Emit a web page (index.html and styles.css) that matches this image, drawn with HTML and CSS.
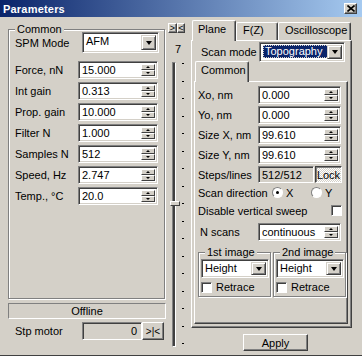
FILE: index.html
```html
<!DOCTYPE html>
<html lang="en">
<head>
    <meta charset="UTF-8">
    <title>Parameters</title>
    <link rel="stylesheet" href="styles.css">
</head>
<body>

    <div class="window">
        <div class="titlebar">
            <span class="title">Parameters</span>
            <div class="close-btn">
                <svg width="8" height="7" viewBox="0 0 8 7"><path d="M0.5 0.5 L7.5 6.5 M7.5 0.5 L0.5 6.5" stroke="#000" stroke-width="1.6"/></svg>
            </div>
        </div>

        <div class="client">
            <!-- left column -->
            <div class="left-col">
                <div class="group common-group">
                    <div class="group-label">Common</div>
                    <div class="mode-row">
                        <label>SPM Mode</label>
                        <div class="combo mode-combo">
                            <span class="combo-text">AFM</span>
                            <span class="combo-btn"><i class="arrow-down"></i></span>
                        </div>
                    </div>
                    <div class="spin-rows">
                        <div class="spin-row"><label>Force, nN</label><div class="spin"><span class="spin-text">15.000</span><span class="spin-btns"><b class="up"></b><b class="down"></b></span></div></div>
                        <div class="spin-row"><label>Int gain</label><div class="spin"><span class="spin-text">0.313</span><span class="spin-btns"><b class="up"></b><b class="down"></b></span></div></div>
                        <div class="spin-row"><label>Prop. gain</label><div class="spin"><span class="spin-text">10.000</span><span class="spin-btns"><b class="up"></b><b class="down"></b></span></div></div>
                        <div class="spin-row"><label>Filter N</label><div class="spin"><span class="spin-text">1.000</span><span class="spin-btns"><b class="up"></b><b class="down"></b></span></div></div>
                        <div class="spin-row"><label>Samples N</label><div class="spin"><span class="spin-text">512</span><span class="spin-btns"><b class="up"></b><b class="down"></b></span></div></div>
                        <div class="spin-row"><label>Speed, Hz</label><div class="spin"><span class="spin-text">2.747</span><span class="spin-btns"><b class="up"></b><b class="down"></b></span></div></div>
                        <div class="spin-row"><label>Temp., °C</label><div class="spin"><span class="spin-text">20.0</span><span class="spin-btns"><b class="up"></b><b class="down"></b></span></div></div>
                    </div>
                </div>

                <div class="status">Offline</div>

                <div class="motor-row">
                    <label>Stp motor</label>
                    <div class="motor-field">0</div>
                    <div class="btn motor-btn">&gt;|&lt;</div>
                </div>
            </div>

            <!-- slider column -->
            <div class="slider-col">
                <div class="arrow-btns">
                    <div class="btn small-btn">&gt;</div>
                    <div class="btn small-btn">&lt;</div>
                </div>
                <div class="slider-value">7</div>
                <div class="slider">
                    <div class="track">
                        <div class="thumb"></div>
                    </div>
                    <div class="ticks">
                        <i></i><i></i><i></i><i></i><i></i><i></i><i></i><i></i><i></i>
                        <i></i><i></i><i></i><i></i><i></i><i></i><i></i><i></i>
                    </div>
                </div>
            </div>

            <!-- right column -->
            <div class="right-col">
                <div class="tabs">
                    <div class="tab active tab-plane">Plane</div>
                    <div class="tab tab-fz">F(Z)</div>
                    <div class="tab tab-osc">Oscilloscope</div>
                </div>
                <div class="tab-panel">
                    <div class="scan-row">
                        <label>Scan mode</label>
                        <div class="combo scan-combo">
                            <span class="combo-text"><span class="selected-text">Topography</span></span>
                            <span class="combo-btn"><i class="arrow-down"></i></span>
                        </div>
                    </div>
                    <div class="subtabs">
                        <div class="tab active subtab">Common</div>
                    </div>
                    <div class="sub-panel">
                        <div class="field-rows">
                            <div class="field-row"><label>Xo, nm</label><div class="spin"><span class="spin-text">0.000</span><span class="spin-btns"><b class="up"></b><b class="down"></b></span></div></div>
                            <div class="field-row"><label>Yo, nm</label><div class="spin"><span class="spin-text">0.000</span><span class="spin-btns"><b class="up"></b><b class="down"></b></span></div></div>
                            <div class="field-row"><label>Size X, nm</label><div class="spin"><span class="spin-text">99.610</span><span class="spin-btns"><b class="up"></b><b class="down"></b></span></div></div>
                            <div class="field-row"><label>Size Y, nm</label><div class="spin"><span class="spin-text">99.610</span><span class="spin-btns"><b class="up"></b><b class="down"></b></span></div></div>
                            <div class="field-row steps-row">
                                <label>Steps/lines</label>
                                <div class="readonly-field">512/512</div>
                                <div class="lock-btn">Lock</div>
                            </div>
                        </div>

                        <div class="direction-row">
                            <label>Scan direction</label>
                            <span class="radio checked"></span><span class="radio-label">X</span>
                            <span class="radio radio-y"></span><span class="radio-label">Y</span>
                        </div>

                        <div class="sweep-row">
                            <label>Disable vertical sweep</label>
                            <span class="checkbox"></span>
                        </div>

                        <div class="field-row nscans-row">
                            <label>N scans</label>
                            <div class="spin"><span class="spin-text">continuous</span><span class="spin-btns"><b class="up"></b><b class="down"></b></span></div>
                        </div>

                        <div class="image-groups">
                            <div class="group image-group first-image">
                                <div class="group-label">1st image</div>
                                <div class="combo image-combo">
                                    <span class="combo-text">Height</span>
                                    <span class="combo-btn"><i class="arrow-down"></i></span>
                                </div>
                                <div class="retrace-row"><span class="checkbox"></span><span>Retrace</span></div>
                            </div>
                            <div class="group image-group second-image">
                                <div class="group-label">2nd image</div>
                                <div class="combo image-combo">
                                    <span class="combo-text">Height</span>
                                    <span class="combo-btn"><i class="arrow-down"></i></span>
                                </div>
                                <div class="retrace-row"><span class="checkbox"></span><span>Retrace</span></div>
                            </div>
                        </div>
                    </div>
                </div>
                <div class="apply-row">
                    <div class="btn apply-btn">Apply</div>
                </div>
            </div>
        </div>
    </div>

</body>
</html>
```

FILE: styles.css
```css
* {
    box-sizing: border-box;
}

body {
    margin: 0;
    font-family: 'Liberation Sans', Arial, sans-serif;
    font-size: 11px;
    color: #000;
    background-color: #d4d0c8;
}

.window {
    width: 362px;
    height: 356px;
    background-color: #d4d0c8;
    border-bottom: 1px solid #404040;
    overflow: hidden;
}

/* title bar */
.titlebar {
    height: 17px;
    display: flex;
    align-items: center;
    justify-content: space-between;
    padding: 0 5px 0 3px;
    background: linear-gradient(to right, #0a246a, #a6caf0);
}

.title {
    color: #fff;
    font-weight: bold;
    font-size: 11px;
    letter-spacing: 0.2px;
}

.close-btn {
    width: 13px;
    height: 11px;
    display: flex;
    align-items: center;
    justify-content: center;
    background-color: #d4d0c8;
    border: 1px solid;
    border-color: #fff #404040 #404040 #fff;
    box-shadow: inset -1px -1px #808080;
}

.client {
    display: flex;
    height: 338px;
}

label {
    white-space: nowrap;
}

/* bevels */
.btn {
    background-color: #d4d0c8;
    border: 1px solid;
    border-color: #fff #404040 #404040 #fff;
    box-shadow: inset -1px -1px #808080;
    display: flex;
    align-items: center;
    justify-content: center;
}

.combo,
.spin,
.motor-field,
.readonly-field {
    border: 1px solid;
    border-color: #808080 #fff #fff #808080;
    box-shadow: inset 1px 1px #404040, inset -1px -1px #d4d0c8;
    background-color: #fff;
    display: flex;
    padding: 2px;
}

.combo-text,
.spin-text {
    flex: 1;
    line-height: 13px;
    padding-left: 1px;
    white-space: nowrap;
    overflow: hidden;
}

.combo-btn {
    width: 15px;
    background-color: #d4d0c8;
    border: 1px solid;
    border-color: #d4d0c8 #404040 #404040 #d4d0c8;
    box-shadow: inset 1px 1px #fff, inset -1px -1px #808080;
    display: flex;
    align-items: center;
    justify-content: center;
}

.arrow-down {
    width: 0;
    height: 0;
    border-left: 3.5px solid transparent;
    border-right: 3.5px solid transparent;
    border-top: 4px solid #000;
}

.spin-btns {
    width: 14px;
    display: flex;
    flex-direction: column;
}

.spin-btns b {
    flex: 1;
    background-color: #d4d0c8;
    border: 1px solid;
    border-color: #fff #404040 #404040 #fff;
    display: flex;
    align-items: center;
    justify-content: center;
}

.spin-btns b::after {
    content: "";
    width: 0;
    height: 0;
    border-left: 2px solid transparent;
    border-right: 2px solid transparent;
}

.spin-btns .up::after {
    border-bottom: 2px solid #000;
}

.spin-btns .down::after {
    border-top: 2px solid #000;
}

/* group boxes */
.group {
    border: 1px solid #808080;
    box-shadow: inset 1px 1px #fff, 1px 1px #fff;
}

.group-label {
    width: fit-content;
    height: 13px;
    line-height: 13px;
    margin: -7px 0 0 6px;
    padding: 0 2px;
    background-color: #d4d0c8;
}

/* left column */
.left-col {
    width: 157px;
    margin-left: 8px;
    display: flex;
    flex-direction: column;
}

.common-group {
    margin-top: 12px;
    height: 270px;
}

.mode-row {
    display: flex;
    align-items: center;
    height: 21px;
    margin-top: -4px;
    padding-left: 6px;
}

.mode-row label {
    width: 67px;
}

.mode-combo {
    width: 77px;
    height: 21px;
}

.spin-rows {
    margin-top: 8px;
    display: flex;
    flex-direction: column;
    gap: 3px;
}

.spin-row {
    display: flex;
    align-items: center;
    height: 18px;
    padding-left: 6px;
}

.spin-row label {
    width: 63px;
}

.spin-row .spin {
    width: 80px;
    height: 18px;
}

.status {
    margin-top: 4px;
    height: 16px;
    width: 158px;
    line-height: 14px;
    text-align: center;
    border: 1px solid;
    border-color: #808080 #fff #fff #808080;
}

.motor-row {
    margin-top: 3px;
    display: flex;
    align-items: center;
    height: 18px;
    padding-left: 7px;
}

.motor-row label {
    width: 67px;
}

.motor-field {
    width: 60px;
    height: 18px;
    background-color: #d4d0c8;
    justify-content: flex-end;
    line-height: 13px;
    padding-right: 4px;
}

.motor-btn {
    width: 22px;
    height: 18px;
    font-size: 10px;
}

/* slider column */
.slider-col {
    width: 26px;
    display: flex;
    flex-direction: column;
}

.arrow-btns {
    display: flex;
    margin: 6px 0 0 3px;
}

.small-btn {
    width: 9px;
    height: 10px;
    font-size: 9px;
    line-height: 8px;
}

.small-btn + .small-btn {
    width: 8px;
}

.slider-value {
    margin-top: 11px;
    padding-left: 10px;
    line-height: 11px;
    height: 11px;
}

.slider {
    margin-top: 7px;
    display: flex;
}

.track {
    position: relative;
    width: 4px;
    height: 285px;
    margin-left: 7px;
    background-color: #404040;
    border-left: 1px solid #808080;
    border-top: 1px solid #808080;
    border-right: 1px solid #fff;
    border-bottom: 1px solid #fff;
}

.thumb {
    position: absolute;
    left: -3px;
    top: 138px;
    width: 10px;
    height: 5px;
    background-color: #d4d0c8;
    border: 1px solid;
    border-color: #fff #404040 #404040 #fff;
}

.ticks {
    height: 281px;
    margin: 1px 0 0 6px;
    display: flex;
    flex-direction: column;
    justify-content: space-between;
}

.ticks i {
    display: block;
    width: 2px;
    height: 1px;
    background-color: #000;
}

/* right column */
.right-col {
    width: 161px;
    display: flex;
    flex-direction: column;
}

.tabs {
    height: 23px;
    display: flex;
    align-items: flex-end;
    padding-left: 1px;
}

.tab {
    height: 18px;
    line-height: 15px;
    padding-left: 6px;
    background-color: #d4d0c8;
    border: 1px solid;
    border-bottom: none;
    border-color: #fff #404040 #fff #fff;
    box-shadow: inset -1px 0 #808080;
    border-radius: 2px 2px 0 0;
}

.tab.active {
    height: 21px;
    margin-bottom: -1px;
    position: relative;
    z-index: 1;
    line-height: 17px;
}

.tab-plane {
    width: 44px;
    padding-left: 5px;
}

.tab-fz {
    width: 42px;
}

.tab-osc {
    width: 73px;
}

.tab-panel {
    height: 288px;
    width: 161px;
    border: 1px solid;
    border-color: #fff #404040 #404040 #fff;
    box-shadow: inset -1px -1px #808080;
    display: flex;
    flex-direction: column;
}

.scan-row {
    display: flex;
    align-items: center;
    margin-top: 1px;
    height: 20px;
    padding-left: 9px;
}

.scan-row label {
    width: 58px;
}

.scan-combo {
    width: 86px;
    height: 20px;
}

.selected-text {
    display: inline-block;
    padding: 0 2px;
    width: 68px;
    background-color: #0a246a;
    color: #fff;
    outline: 1px dotted #d4d0c8;
    outline-offset: -1px;
}

.subtabs {
    margin-top: 2px;
    height: 17px;
    display: flex;
    align-items: flex-end;
    padding-left: 3px;
}

.subtab {
    width: 54px;
    height: 18px;
    line-height: 16px;
    padding-left: 5px;
}

.sub-panel {
    margin-left: 2px;
    width: 154px;
    height: 243px;
    border: 1px solid;
    border-color: #fff #404040 #404040 #fff;
    box-shadow: inset -1px -1px #808080;
    padding-left: 3px;
}

.field-rows {
    margin-top: 4px;
    display: flex;
    flex-direction: column;
    gap: 2px;
}

.field-row {
    display: flex;
    align-items: center;
    height: 18px;
}

.field-row label {
    width: 60px;
}

.field-row .spin {
    width: 83px;
    height: 18px;
}

.steps-row {
    height: 17px;
}

.readonly-field {
    width: 56px;
    height: 17px;
    background-color: #d4d0c8;
    line-height: 13px;
    padding-left: 3px;
}

/* pressed toggle button with dithered face */
.lock-btn {
    width: 27px;
    height: 17px;
    margin-left: 1px;
    display: flex;
    align-items: center;
    justify-content: center;
    border: 1px solid;
    border-color: #404040 #fff #fff #404040;
    box-shadow: inset 1px 1px #808080;
    background: repeating-conic-gradient(#fff 0 25%, #d4d0c8 0 50%) 0 0 / 2px 2px;
}

.direction-row {
    margin-top: 3px;
    height: 13px;
    display: flex;
    align-items: center;
}

.direction-row label {
    width: 74px;
}

.radio {
    width: 11px;
    height: 11px;
    border-radius: 50%;
    background-color: #fff;
    border: 1px solid;
    border-color: #808080 #fff #fff #808080;
    display: flex;
    align-items: center;
    justify-content: center;
}

.radio.checked::after {
    content: "";
    width: 3px;
    height: 3px;
    border-radius: 50%;
    background-color: #000;
}

.radio-label {
    margin-left: 3px;
    width: 22px;
}

.radio-y {
    margin-left: 3px;
}

.sweep-row {
    margin-top: 5px;
    height: 13px;
    display: flex;
    align-items: center;
}

.sweep-row label {
    width: 133px;
}

.checkbox {
    width: 11px;
    height: 11px;
    background-color: #fff;
    border: 1px solid;
    border-color: #808080 #fff #fff #808080;
    box-shadow: inset 1px 1px #404040;
}

.nscans-row {
    margin-top: 6px;
}

.nscans-row label {
    padding-left: 2px;
}

.image-groups {
    margin-top: 11px;
    display: flex;
    gap: 2px;
}

.image-group {
    height: 45px;
    padding-left: 2px;
}

.image-group .group-label {
    margin-left: 4px;
}

.first-image {
    width: 73px;
}

.second-image {
    width: 73px;
}

.image-combo {
    width: 68px;
    height: 19px;
}

.retrace-row {
    margin-top: 3px;
    display: flex;
    align-items: center;
    gap: 4px;
    height: 12px;
}

.apply-row {
    margin-top: 6px;
    padding-left: 52px;
}

.apply-btn {
    width: 65px;
    height: 17px;
}
```
